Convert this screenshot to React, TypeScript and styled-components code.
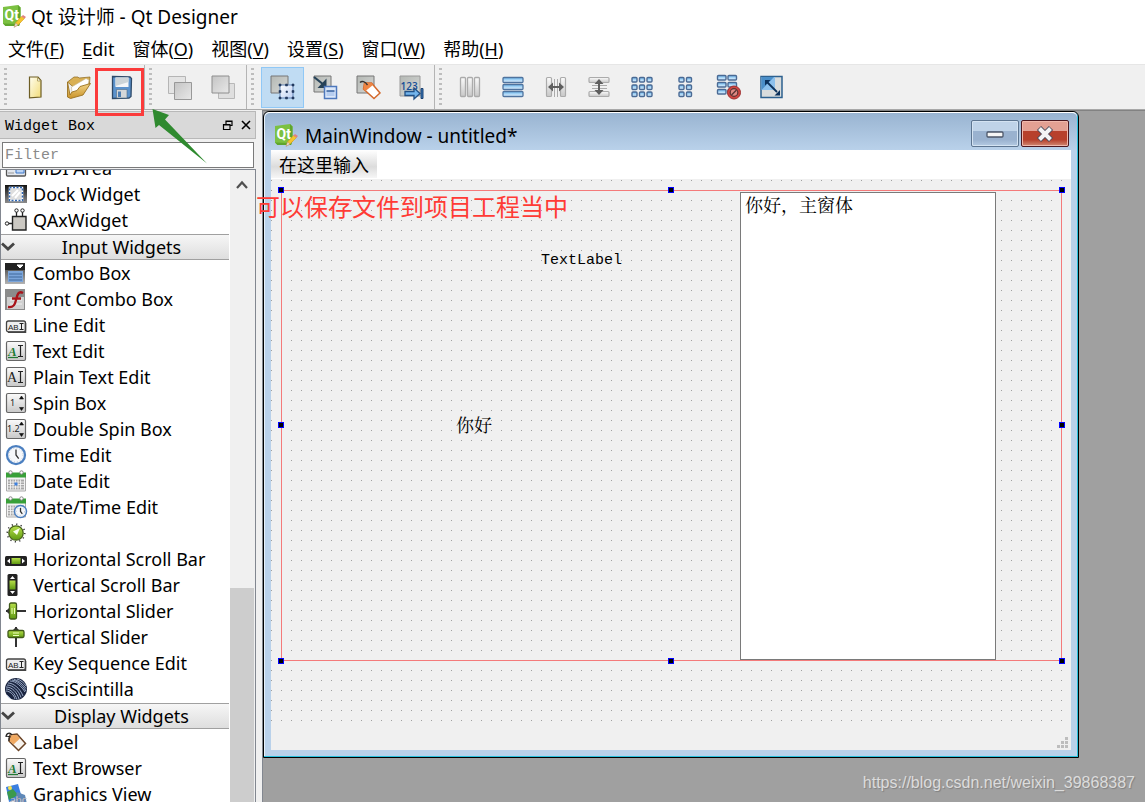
import React from "react";
import styled, { createGlobalStyle } from "styled-components";

const Global = createGlobalStyle`
  * { box-sizing: border-box; }
  body { margin: 0; overflow: hidden; background: #f0f0f0; color: #000;
    font-family: "Noto Sans", "Noto Sans CJK SC", sans-serif; font-size: 18px; }
  button { font: inherit; color: inherit; border: 0; padding: 0; background: none; }
  svg { display: block; flex: none; overflow: visible; }
`;
const mono = `"Liberation Mono", "Noto Sans CJK SC", monospace`;
const song = `"Liberation Mono", "Noto Serif CJK SC", "Noto Sans CJK SC", monospace`;

const Page = styled.div`
  position: relative; display: flex; flex-direction: column; height: 100vh; overflow: hidden;
`;
const AppTitle = styled.header`
  display: flex; align-items: center; gap: 6px; height: 34px; padding: 0 3px 2px; background: #fff; flex: none;
  font-size: 19px;
`;
const Menu = styled.nav`
  display: flex; align-items: center; gap: 18px; height: 30px; padding: 0 8px; background: #fff; flex: none;
`;
const MenuButton = styled.button`
  white-space: nowrap; line-height: 28px;
  u { text-decoration-thickness: 1px; text-underline-offset: 2px; }
`;
const Toolbar = styled.div`
  display: flex; height: 46px; flex: none; background: #f0f0f0;
  border-top: 1px solid #e6e6e6; border-bottom: 1px solid #a8a8a8;
`;
const Tools = styled.div<{ $last?: boolean }>`
  display: flex; align-items: center; padding-right: 1px;
  border-right: ${(p) => (p.$last ? "0" : "1px solid #b4b4b4")};
`;
const Grip = styled.span`
  width: 3px; height: 39px; margin: 0 7px 0 4px;
  background: repeating-linear-gradient(#bdbdbd 0 2px, transparent 2px 5px);
`;
const ToolButton = styled.button<{ $on?: boolean }>`
  display: grid; place-items: center; width: 43px; height: 41px;
  border: 1px solid ${(p) => (p.$on ? "#90c8f6" : "transparent")};
  background: ${(p) => (p.$on ? "#c0dcf3" : "none")};
`;
const Body = styled.div`
  display: grid; grid-template-columns: 256px 1fr; gap: 6px; flex: 1; min-height: 0;
`;
const Dock = styled.aside`
  display: flex; flex-direction: column; min-height: 0;
`;
const DockTitle = styled.div`
  display: flex; align-items: center; gap: 8px; height: 28px; padding: 0 4px 0 5px; flex: none;
  margin-top: 1px; background: #d9d9d9; border: 1px solid #b8b8b8; border-left: 0;
  font: 15px/24px ${mono};
  span { flex: 1; padding-top: 3px; }
`;
const Filter = styled.input`
  height: 26px; margin: 3px 2px 1px; padding: 1px 2px 0; border: 1px solid #7a7a7a; border-radius: 0;
  outline: 0; background: #fff; font: 15px/24px ${mono}; flex: none;
  &::placeholder { color: #8a8a8a; opacity: 1; }
`;
const ListFrame = styled.div`
  display: grid; grid-template-columns: 1fr 25px; flex: 1; min-height: 0; overflow: hidden;
  border: 1px solid #828790; border-bottom: 0; background: #fff;
`;
const ListView = styled.div`
  min-width: 0; min-height: 0; overflow: hidden; padding-right: 1px;
`;
const ListContent = styled.ul`
  list-style: none; padding: 0; margin: -15px 0 0;
`;
const Row = styled.li`
  display: flex; align-items: center; gap: 6px; height: 26px; padding-left: 4px; white-space: nowrap;
`;
const Section = styled.li`
  height: 27px; padding-top: 1px;
`;
const SectionButton = styled.button`
  display: grid; grid-template-columns: 13px 1fr; align-items: center; width: 100%; height: 26px;
  border-top: 1px solid #a0a0a0; border-bottom: 1px solid #a0a0a0;
  background: linear-gradient(#f6f6f6, #dedede); line-height: 24px;
`;
const Scroll = styled.div`
  display: flex; flex-direction: column; background: #f0f0f0; border-right: 1px solid #f0f0f0;
`;
const ScrollUp = styled.button`
  display: grid; place-items: center; height: 30px; flex: none;
`;
const ScrollTrack = styled.div`
  flex: 1; padding-top: 388px;
`;
const ScrollThumb = styled.div`
  height: 100%; background: #cdcdcd;
`;
const Workspace = styled.main`
  position: relative; overflow: hidden; background: #a0a0a0;
  border-top: 1px solid #828282; border-left: 1px solid #828790;
`;
const FormWindow = styled.section`
  position: absolute; left: 0; top: 0; width: 816px;
  border: 1px solid #000; border-radius: 6px 6px 0 0;
  padding: 0 7px 7px; background: #b9d1ea;
  box-shadow: inset -1px -1px 0 #28c0dc, inset 1px 1px 0 #e8f2fb;
`;
const FormTitle = styled.header`
  display: flex; align-items: center; gap: 8px; height: 38px; margin: 0 -6px; padding: 7px 8px 0 10px;
  background: linear-gradient(#99b4d1, #b9d1ea);
  border-top: 1px solid #fff; border-radius: 5px 5px 0 0;
  h2 { flex: 1; margin: 0; padding-top: 2px; font-size: 19px; font-weight: 400; }
`;
const Controls = styled.div`
  display: flex; gap: 2px; align-self: flex-start;
`;
const ControlButton = styled.button<{ $close?: boolean }>`
  display: grid; place-items: center; width: 48px; height: 27px; border-radius: 2px;
  border: 1px solid ${(p) => (p.$close ? "#4a1820" : "#5d7590")};
  box-shadow: inset 0 0 0 1px ${(p) => (p.$close ? "#f0b8ac" : "#d4e3f2")};
  background: ${(p) => (p.$close
    ? "linear-gradient(#e3a093 0 38%, #b7402c 42% 75%, #d08a74)"
    : "linear-gradient(#bfd3e8 0 38%, #9ab2cf 42% 75%, #b4cae2)")};
`;
const FormMenu = styled.div`
  height: 29px; background: #fff;
`;
const TypeHere = styled.button`
  height: 28px; padding: 2px 8px 0; background: linear-gradient(#fff, #dcdcdc 60%, #f6f6f6); line-height: 26px;
`;
const FormCanvas = styled.div`
  position: relative; height: 543px; background: #f0f0f0;
`;
const Dots = styled.svg`
  width: 100%; height: 100%;
`;
const Selection = styled.div`
  position: absolute; left: 10px; top: 11px; width: 781px; height: 471px; border: 1px solid #f47a7a;
`;
const Handles = styled.div`
  position: absolute; inset: -1px; pointer-events: none;
`;
const Handle = styled.i<{ $x: number; $y: number }>`
  position: absolute; width: 6px; height: 6px; background: #000; border: 1px solid #00f;
  left: calc(${(p) => p.$x}% - 3px); top: calc(${(p) => p.$y}% - 3px);
`;
const FormLabel = styled.span<{ $x: number; $y: number; $big?: boolean }>`
  position: absolute; left: ${(p) => p.$x}px; top: ${(p) => p.$y}px;
  font: ${(p) => (p.$big ? 18 : 15)}px/24px ${song}; white-space: nowrap;
`;
const FormText = styled.textarea`
  position: absolute; left: 458px; top: 1px; width: 256px; height: 468px; resize: none; outline: 0;
  margin: 0; padding: 1px 4px; border: 1px solid #7a7a7a; border-radius: 0; background: #fff;
  font: 18px/26px ${song}; overflow: hidden;
`;
const FormStatus = styled.footer`
  display: flex; justify-content: flex-end; align-items: flex-end; height: 28px; padding: 2px 3px; background: #f0f0f0;
`;
const Watermark = styled.div`
  position: absolute; right: 10px; bottom: 7px; color: #dcdcdc; font: 16px/24px "Liberation Sans", sans-serif;
  text-shadow: 1px 1px 1px #808080;
`;
const Note = styled.p`
  position: absolute; left: 256px; top: 190px; margin: 0; color: #ff3b35; font-size: 24px; line-height: 34px; white-space: nowrap;
`;
const Marks = styled.svg`
  position: absolute; left: 92px; top: 64px; width: 120px; height: 104px; pointer-events: none;
`;
const HiddenDefs = styled.svg`
  position: absolute;
`;

const Defs = () => (
  <HiddenDefs width="0" height="0" aria-hidden="true">
    <defs>
      <linearGradient id="gray" x2="1" y2="1"><stop stopColor="#c4c4c4" /><stop offset="1" stopColor="#e8e8e8" /></linearGradient>
      <linearGradient id="gray2" x2="1" y2="1"><stop stopColor="#b4b8b4" /><stop offset="1" stopColor="#d6d8d6" /></linearGradient>
      <linearGradient id="blue" x2="0" y2="1"><stop stopColor="#6db8ee" /><stop offset="1" stopColor="#e8f5ff" /></linearGradient>
      <linearGradient id="pale" x2="1" y2="1"><stop stopColor="#fff" /><stop offset="1" stopColor="#bdd0f2" /></linearGradient>
      <linearGradient id="btn" x2="0" y2="1"><stop stopColor="#fbfbfb" /><stop offset="1" stopColor="#c8c8c8" /></linearGradient>
      <linearGradient id="dark" x2="0" y2="1"><stop stopColor="#333" /><stop offset="1" stopColor="#b4b4b4" /></linearGradient>
      <linearGradient id="dock" x2="0" y2="1"><stop stopColor="#111" /><stop offset="1" stopColor="#8c8c8c" /></linearGradient>
      <linearGradient id="yellow" x2="1" y2="1"><stop stopColor="#fffef0" /><stop offset="1" stopColor="#f2dc78" /></linearGradient>
      <linearGradient id="gold" x2="0" y2="1"><stop stopColor="#f6dc92" /><stop offset="1" stopColor="#c99228" /></linearGradient>
      <linearGradient id="green" x2="0" y2="1"><stop stopColor="#b7e04a" /><stop offset="1" stopColor="#5f9a12" /></linearGradient>
    </defs>
  </HiddenDefs>
);

const QtLogo = () => (
  <svg width="22" height="24" viewBox="0 0 22 24" aria-hidden="true">
    <path d="M0 3 15 1l2.500 2.500V18L16 22H2.500L0 19.500z" fill="#7cc142" /><path d="M15 1l2.500 2.500V18L16 22H2.500L0 19.500l15 .5z" fill="#5fa52c" />
    <text x="1.500" y="15.500" fontSize="14" fontWeight="700" fontFamily="Roboto, sans-serif" fill="#fff">Qt</text>
    <path d="m11.500 22.500 1-3.500 6-6.500 3 2-6.500 6.500z" fill="#f5c52e" stroke="#d99a1e" strokeWidth=".6" /><path d="m11 23.500 1.500-4.500 2.500 2z" fill="#eadfce" stroke="#a08060" strokeWidth=".4" /><path d="m18.500 12.500 1.500-1.500 3 2-1.500 1.500z" fill="#e08080" />
  </svg>
);

const T = ({ children }: { children: React.ReactNode }) => (
  <svg width="24" height="26" viewBox="1 0 24 26" aria-hidden="true">{children}</svg>
);
const NoEntry = () => (
  <g><circle cx="18" cy="18.500" r="6.500" fill="#cf4540" stroke="#a03030" /><circle cx="18" cy="18.500" r="3.800" fill="#df8a84" stroke="#5a3434" strokeWidth="1.200" /><path d="m15.500 21 5-5" stroke="#5a3434" strokeWidth="1.400" /></g>
);
const Cells = ({ xs, ys, w = 5 }: { xs: number[]; ys: number[]; w?: number }) => (
  <>{ys.map((y) => xs.map((x) => <rect key={`${x}-${y}`} x={x} y={y} width={w} height="4.500" rx="1" fill="url(#blue)" stroke="#4a6a94" strokeWidth="1.400" />))}</>
);

const tools: Record<string, React.ReactNode> = {
  new: <T><path d="M6.500 3h8.500l3 3.500V23l-11.500.8z" fill="url(#yellow)" stroke="#6d5d24" strokeWidth="1.200" /><path d="m14.500 3.500 3 3.500h-3z" fill="#fff" stroke="#a39450" strokeWidth=".8" /></T>,
  open: <T><path d="M1.500 8 8 3h4l1 1 11-1-.500 7-8 10z" fill="#d9b054" stroke="#8a661c" strokeWidth=".7" /><path d="M5.500 13 20 4.500l3 1.500-1 5L6 21z" fill="#fff" stroke="#c5b78f" strokeWidth=".6" /><path d="M1.500 8v15l3 1.500L17 21l7.500-11.500L14 12.500l-3 4-5 1.500-2 3z" fill="url(#gold)" stroke="#9a7220" strokeWidth=".9" /></T>,
  save: <T><path d="m3.500 2.500 17.500.5 1.500 1.500-.5 18-2 1.500-16.500.5z" fill="#5b92cc" stroke="#2f4a68" strokeWidth="1.300" /><path d="M6.500 3.500h13v9.500h-13z" fill="#f4f6f8" /><path d="M6.500 3.500h13v4.500l-13 4z" fill="#ccd4d8" /><path d="M7.500 15.500H18V24H7.500z" fill="#d4d7d9" stroke="#4d6b88" strokeWidth=".6" /><path d="M9 17.500h3V23H9z" fill="#4c7db2" /></T>,
  copy: <T><path d="M.5 2.500h17v17H.5z" fill="#e4e4e4" stroke="#b5b5b5" /><path d="M6.500 8.500h17v17h-17z" fill="url(#gray)" stroke="#989898" /></T>,
  back: <T><path d="M7.500 9.500h16v15h-16z" fill="#dfdfdf" stroke="#b8b8b8" /><path d="M1 2h17v17H1z" fill="url(#gray)" stroke="#8e8e8e" /></T>,
  widgets: <T><path d="M1 2h17v17H1z" fill="url(#gray2)" stroke="#777" /><rect x="10" y="11" width="13" height="13" fill="url(#pale)" stroke="#6585b8" /><path d="M9 10h2v2H9zM15.500 10h2v2h-2zM22 10h2v2h-2zM9 16.500h2v2H9zM22 16.500h2v2h-2zM9 23h2v2H9zM15.500 23h2v2h-2zM22 23h2v2h-2zM16 17h1.500v1.500H16z" fill="#243b60" stroke="#243b60" strokeWidth=".6" /></T>,
  signals: <T><path d="M1 2h17v16H1z" fill="url(#gray2)" stroke="#777" /><path d="m1 3 10 8" stroke="#264258" strokeWidth="2.200" /><path d="m13.500 4.500v9.500H4.500z" fill="#264258" /><rect x="11.500" y="12.500" width="12" height="12" fill="#dce8fa" stroke="#4e78bd" strokeWidth="1.500" /><path d="M13.500 17h8v5h-8z" fill="#b6cdf0" /><path d="M13.500 17h8" stroke="#345f9c" strokeWidth="1.500" /></T>,
  buddies: <T><path d="M1 2h17v17H1z" fill="url(#gray2)" stroke="#777" /><path d="M8.500 9h7l8.500 10-6 5.500L7.500 15z" fill="#fff" stroke="#d4692c" strokeWidth="1.500" /><path d="M8.500 9h7l1.500 2-7.500 6L7.500 15z" fill="#ee8544" /><path d="M4 8.500c2-2 5-1 7.500 2.500" fill="none" stroke="#333" strokeWidth="1.300" /></T>,
  tab: <T><path d="M1 2h20v20H1z" fill="url(#gray2)" stroke="#9a9a9a" /><text x="1.500" y="16" fontSize="10" fontFamily="Open Sans, Noto Sans" fontWeight="600" fill="#174f96">123</text><path d="M6 17.500h9V14l6 5.500-6 5.500v-3.500H6z" fill="#73b5ed" stroke="#204f85" strokeWidth="1.300" /><path d="M22 14.500h2v10h-2z" fill="#3677bb" stroke="#1d4270" /></T>,
  horiz: <T><g fill="url(#btn)" stroke="#ababab" strokeWidth="1.300"><rect x="2.500" y="3.500" width="5" height="19" rx="1" /><rect x="9.500" y="3.500" width="5" height="19" rx="1" /><rect x="16.500" y="3.500" width="5" height="19" rx="1" /></g></T>,
  vert: <T><g fill="url(#blue)" stroke="#4f739e" strokeWidth="1.300"><rect x="2" y="3.500" width="20" height="5" rx="1" /><rect x="2" y="10.500" width="20" height="5" rx="1" /><rect x="2" y="17.500" width="20" height="5" rx="1" /></g></T>,
  hsplit: <T><g fill="url(#btn)" stroke="#ababab" strokeWidth="1.200"><rect x="2.500" y="3.500" width="5" height="19" rx="1" /><rect x="16.500" y="3.500" width="5" height="19" rx="1" /></g><path d="M10.500 5v18M13.500 5v18" stroke="#aaa" /><path d="m4 13 5-4.500V12h6V8.500L20 13l-5 4.500V14H9v3.500z" fill="#5e5e5e" /></T>,
  vsplit: <T><g fill="url(#btn)" stroke="#ababab" strokeWidth="1.200"><rect x="2" y="3.500" width="20" height="5" rx="1" /><rect x="2" y="17.500" width="20" height="5" rx="1" /></g><path d="M5 11.500h15M5 14.500h15" stroke="#aaa" /><path d="m12 5 4.500 5H13v6h3.500L12 21l-4.500-5H11v-6H7.500z" fill="#5e5e5e" /></T>,
  grid: <T><Cells xs={[2, 9.5, 17]} ys={[3.5, 11, 18]} /></T>,
  form: <T><Cells xs={[6, 13.5]} ys={[3.5, 11, 18]} /></T>,
  breakup: <T><Cells xs={[1.5, 12]} ys={[1.5, 8.5, 15.5]} w={8.5} /><NoEntry /></T>,
  adjust: <T><path d="M2 2.500h21v21H2z" fill="#d9dcdc" stroke="#2d608e" strokeWidth="1.500" /><path d="M2.500 3H16v13H2.500z" fill="#8cc0ec" /><path d="M2.500 16 15 3H2.500z" fill="#4a8ec8" /><path d="m8 8 10 10" stroke="#0c315b" strokeWidth="1.800" /><path d="M6 6h5.500L6 11.500zM21 21.500h-5.500L21 16z" fill="#0c315b" /></T>,
};

const L = ({ children }: { children: React.ReactNode }) => (
  <svg width="22" height="22" viewBox="0 0 22 22" aria-hidden="true">{children}</svg>
);
const Box = () => <rect x="1.500" y="1.500" width="19" height="19" rx="1.500" fill="url(#btn)" stroke="#666" strokeWidth="1.200" />;
const IBeam = ({ x }: { x: number }) => <path d={`M${x - 2.5} 5.500h5M${x - 2.5} 16.500h5M${x} 5.500v11`} stroke="#222" strokeWidth="1.200" fill="none" />;
const Abi = () => (
  <L><rect x="1.500" y="7" width="19" height="11" rx="2" fill="#eee" stroke="#444" strokeWidth="1.300" /><path d="M3 18.300h17.500V9" stroke="#444" strokeWidth="1.500" fill="none" />
    <text x="3" y="15.500" fontSize="8" fontFamily="Liberation Sans" fill="#222">AB</text><path d="M14.500 9.500h4M14.500 15.500h4M16.500 9.500v6" stroke="#222" fill="none" /></L>
);
const TextEditIcon = () => (
  <L><Box /><text x="3" y="15.500" fontSize="13" fontStyle="italic" fontFamily="Liberation Serif" fontWeight="700" fill="#227a35">A</text><path d="M3 17.500h10" stroke="#227a35" strokeWidth="1.200" /><IBeam x={15.5} /></L>
);
const Spin = ({ text }: { text: string }) => (
  <L><Box /><text x={text.length > 1 ? 2 : 5} y="14" fontSize="9" fontFamily="Noto Sans" fill="#222">{text}</text><path d="m14.500 7 2-3 2 3zM14.500 15.500l2 3 2-3z" fill="#111" stroke="#111" strokeWidth=".6" /></L>
);
const Clock = ({ x = 11, y = 11, r = 9 }: { x?: number; y?: number; r?: number }) => (
  <g><circle cx={x} cy={y} r={r} fill="#f6f8fb" stroke="#4b7fc0" strokeWidth={r / 4} /><circle cx={x} cy={y} r={r - 2} fill="none" stroke="#b9c4d2" strokeDasharray="1 2" /><path d={`M${x} ${y - r * 0.6}V${y}l${r * 0.3} ${r * 0.4}`} fill="none" stroke="#333" strokeWidth="1.300" /></g>
);
const Calendar = () => (
  <g><path d="M1.500 5h19v16h-19z" fill="#f3f3f3" stroke="#aaa" /><path d="M1 2.500h20v5H1z" fill="#38a038" /><path d="M3 9.500h16v10H3z" fill="#a8a8a8" /><path d="M3 12h16M3 14.500h16M3 17h16M5.500 9.500v10M8 9.500v10M10.500 9.500v10M13 9.500v10M15.500 9.500v10" stroke="#f8f8f8" strokeWidth=".8" /><circle cx="5.500" cy="2.500" r="1.700" fill="#fff" stroke="#888" /><circle cx="16.500" cy="2.500" r="1.700" fill="#fff" stroke="#888" /></g>
);
const LabelIcon = () => (
  <L><path d="m5 4 7-1 8.500 9.500-7 7L4 10z" fill="#f7f3ee" stroke="#6b4426" strokeWidth="1.500" /><path d="m5.500 4.500 6-.8 3.500 3.800-6.500 6L4.500 10z" fill="#f0a860" /><path d="M1 6c0-4 4-5 6-2M1 5l5 1M4 5v5" fill="none" stroke="#222" strokeWidth="1.200" /></L>
);

type Item = { name: string; icon?: React.ReactNode };
const items: Item[] = [
  { name: "MDI Area", icon: <L><rect x="1.500" y="2" width="19" height="17" rx="1" fill="#e4e8ee" stroke="#555" strokeWidth="1.300" /><path d="M11 7h8v9h-8z" fill="#bdd5f5" stroke="#3f78c9" /><path d="M3 12h6M3 16h6" stroke="#999" /></L> },
  { name: "Dock Widget", icon: <L><path d="M0 2h22v18H0z" fill="url(#dock)" /><path d="M4.500 4.500h13v13h-13z" fill="#dedede" stroke="#fff" strokeWidth="1.500" /><path d="M4.500 4.500h13v13h-13z" fill="none" stroke="#2e66b4" strokeWidth="1.500" strokeDasharray="2 1.500" /><path d="m7 13 6-6M10 15l5-6" stroke="#fff" strokeWidth="2" /></L> },
  { name: "QAxWidget", icon: <L><path d="M7.500 7.500h13.500V21H7.500z" fill="#cbc8c2" stroke="#222" strokeWidth="1.400" /><path d="M11.500 7V2M17.500 7V2M7 14.500H3" stroke="#222" strokeWidth="1.300" /><circle cx="11.500" cy="1.500" r="1.700" fill="#fff" stroke="#222" /><circle cx="17.500" cy="1.500" r="1.700" fill="#fff" stroke="#222" /><circle cx="2" cy="14.500" r="1.700" fill="#fff" stroke="#222" /></L> },
  { name: "Input Widgets" },
  { name: "Combo Box", icon: <L><path d="M0 1h20v21H0z" fill="url(#dark)" /><path d="M0 1h20v7H0z" fill="#222" /><path d="m12 3 3 3 3-3z" fill="#fff" stroke="#fff" /><path d="M3 9h15v11H3z" fill="#7ba5da" /><path d="M4 12h13M4 15h13M4 18h13" stroke="#41699c" /></L> },
  { name: "Font Combo Box", icon: <L><path d="M0 1h20v21H0z" fill="#8b8b8b" /><path d="M2 9h17v12H2z" fill="#d0d0d0" /><path d="M5 12h12M5 16h12" stroke="#eee" /><path d="M18 5c-5-3-6 3-7 7-1 5-3 8-8 7M7 10.500h9" stroke="#a8141a" strokeWidth="2.300" fill="none" /></L> },
  { name: "Line Edit", icon: <Abi /> },
  { name: "Text Edit", icon: <TextEditIcon /> },
  { name: "Plain Text Edit", icon: <L><Box /><text x="2" y="16" fontSize="14" fontFamily="Liberation Serif" fill="#222">A</text><IBeam x={15.5} /></L> },
  { name: "Spin Box", icon: <Spin text="1" /> },
  { name: "Double Spin Box", icon: <Spin text="1.2" /> },
  { name: "Time Edit", icon: <L><Clock /></L> },
  { name: "Date Edit", icon: <L><Calendar /><path d="M9.500 12.500h3v3h-3z" fill="#3d80df" /></L> },
  { name: "Date/Time Edit", icon: <L><Calendar /><Clock x={15.5} y={15.5} r={6} /></L> },
  { name: "Dial", icon: <L><circle cx="11" cy="11" r="8.800" fill="none" stroke="#333" strokeWidth="1.500" strokeDasharray="1.200 3.400" /><circle cx="11" cy="11" r="7.200" fill="url(#green)" stroke="#47631a" strokeWidth="1.300" /><path d="m15 6-3 7-4-3.500z" fill="#f8fff0" /></L> },
  { name: "Horizontal Scroll Bar", icon: <L><rect x="0" y="8" width="22" height="10" rx="1.500" fill="#222" /><path d="m5 10.500-3 2.500 3 2.500zM17 10.500l3 2.500-3 2.500z" fill="#fff" /><path d="M6.500 10h9v6h-9z" fill="url(#green)" /></L> },
  { name: "Vertical Scroll Bar", icon: <L><rect x="2.500" y="0" width="10" height="22" rx="1.500" fill="#222" /><path d="m5 5 2.500-3L10 5zM5 17l2.500 3 2.500-3z" fill="#fff" /><path d="M4.500 6.500h6v9h-6z" fill="url(#green)" /></L> },
  { name: "Horizontal Slider", icon: <L><path d="M1 11h20" stroke="#333" strokeWidth="2" /><path d="m4 8-3 3 3 3z" fill="#333" /><rect x="4.500" y="3" width="7" height="16" rx="1.500" fill="url(#green)" stroke="#40591a" strokeWidth="1.300" /><path d="M7 8v6M9.500 8v6" stroke="#eaffb8" /></L> },
  { name: "Vertical Slider", icon: <L><path d="M11 1v20" stroke="#333" strokeWidth="2" /><path d="m8 4 3-3 3 3z" fill="#333" /><rect x="3" y="4.500" width="16" height="7" rx="1.500" fill="url(#green)" stroke="#40591a" strokeWidth="1.300" /><path d="M8 7h6M8 9.500h6" stroke="#eaffb8" /></L> },
  { name: "Key Sequence Edit", icon: <Abi /> },
  { name: "QsciScintilla", icon: <L><circle cx="11" cy="11" r="11" fill="#1b2540" /><path d="M3 5c5 0 12 5 15 13M5 3c6 0 12 6 15 11M9 1.500c5 1 9 5 12 9M1 9c6 0 11 5 13 12M1 13c4 0 8 4 9 8M2 17l4 4M2 7c6 0 12 6 14 12.500M7 2c6 1 10 5 14 11M1 11c5 0 9 5 11 10.500M12 1c4 1 7 4 9 7" fill="none" stroke="#a9bad6" strokeWidth=".9" /></L> },
  { name: "Display Widgets" },
  { name: "Label", icon: <LabelIcon /> },
  { name: "Text Browser", icon: <TextEditIcon /> },
  { name: "Graphics View", icon: <L><path d="m1 4 12-3 4 14-13 4z" fill="#3b7fe0" /><path d="m2 9 6-3 5 6-9 5z" fill="#3c9a4c" /><circle cx="5" cy="5" r="2" fill="#f7e34f" /><path d="m12 9 8 3 2 9H9z" fill="#5f88b8" /><text x="5" y="21" fontSize="10" fontFamily="Noto Sans" fill="#fff" stroke="#667" strokeWidth=".3">abc</text></L> },
];

const menus: [string, string, string][] = [
  ["文件(", "F", ")"], ["", "E", "dit"], ["窗体(", "O", ")"], ["视图(", "V", ")"], ["设置(", "S", ")"], ["窗口(", "W", ")"], ["帮助(", "H", ")"],
];
const groups = [
  ["new", "open", "save"], ["copy", "back"], ["widgets", "signals", "buddies", "tab"],
  ["horiz", "vert", "hsplit", "vsplit", "grid", "form", "breakup", "adjust"],
];
const mid = 49.9;
const handles: [number, number][] = [[0, 0], [mid, 0], [100, 0], [0, mid], [100, mid], [0, 100], [mid, 100], [100, 100]];

export default function App() {
  return (
    <Page>
      <Global />
      <Defs />
      <AppTitle><QtLogo /><span>Qt 设计师 - Qt Designer</span></AppTitle>
      <Menu>{menus.map(([a, k, b]) => <MenuButton key={k}>{a}<u>{k}</u>{b}</MenuButton>)}</Menu>
      <Toolbar>
        {groups.map((g, i) => (
          <Tools key={i} $last={i === 3}>
            <Grip />
            {g.map((n) => <ToolButton key={n} $on={n === "widgets"} aria-label={n}>{tools[n]}</ToolButton>)}
          </Tools>
        ))}
      </Toolbar>
      <Body>
        <Dock>
          <DockTitle>
            <span>Widget Box</span>
            <button aria-label="Float"><svg width="10" height="10" viewBox="0 0 10 10"><path d="M3 4V1h6v4.500H7M3 1.500h6M.5 4.500H7v5H.5zM0 5h7" fill="none" stroke="#000" strokeWidth="1.200" /></svg></button>
            <button aria-label="Close dock"><svg width="10" height="10" viewBox="0 0 10 10"><path d="m1 1 8 8M9 1 1 9" stroke="#000" strokeWidth="1.600" /></svg></button>
          </DockTitle>
          <Filter placeholder="Filter" aria-label="Filter" />
          <ListFrame>
            <ListView>
              <ListContent>
                {items.map((it) => it.icon
                  ? <Row key={it.name}>{it.icon}<span>{it.name}</span></Row>
                  : <Section key={it.name}><SectionButton>
                      <svg width="14" height="10" viewBox="0 0 14 10"><path d="m1 1.500 6 5.500 6-5.500" fill="none" stroke="#444" strokeWidth="2.800" /></svg>
                      <span>{it.name}</span>
                    </SectionButton></Section>)}
              </ListContent>
            </ListView>
            <Scroll>
              <ScrollUp aria-label="Scroll up"><svg width="12" height="10" viewBox="0 0 12 10"><path d="m1 8 5-5.500L11 8" fill="none" stroke="#505050" strokeWidth="2.200" /></svg></ScrollUp>
              <ScrollTrack><ScrollThumb /></ScrollTrack>
            </Scroll>
          </ListFrame>
        </Dock>
        <Workspace>
          <FormWindow>
            <FormTitle>
              <QtLogo /><h2>MainWindow - untitled*</h2>
              <Controls>
                <ControlButton aria-label="Minimize"><svg width="18" height="8" viewBox="0 0 18 8"><rect x="1" y="2" width="16" height="5" rx="1" fill="#f6f6f6" stroke="#4c5668" strokeWidth="1.300" /></svg></ControlButton>
                <ControlButton $close aria-label="Close"><svg width="18" height="16" viewBox="0 0 18 16"><path d="m3 2 12 12M15 2 3 14" stroke="#4c4c5c" strokeWidth="6" /><path d="m3.500 2.500 11 11M14.500 2.500l-11 11" stroke="#f4f4f4" strokeWidth="4" /></svg></ControlButton>
              </Controls>
            </FormTitle>
            <FormMenu><TypeHere>在这里输入</TypeHere></FormMenu>
            <FormCanvas>
              <Dots aria-hidden="true">
                <defs><pattern id="dots" width="10" height="10" patternUnits="userSpaceOnUse"><rect y="1" width="1" height="1" fill="#a0a0a0" /></pattern></defs>
                <rect width="100%" height="100%" fill="url(#dots)" />
              </Dots>
              <Selection>
                <FormLabel $x={259} $y={58}>TextLabel</FormLabel>
                <FormLabel $x={174} $y={224} $big>你好</FormLabel>
                <FormText defaultValue="你好，主窗体" aria-label="Text" />
                <Handles>{handles.map(([x, y]) => <Handle key={`${x}-${y}`} $x={x} $y={y} />)}</Handles>
              </Selection>
            </FormCanvas>
            <FormStatus>
              <svg width="11" height="11" viewBox="0 0 11 11"><path d="M8 0h3v3H8zM4 4h3v3H4zM8 4h3v3H8zM0 8h3v3H0zM4 8h3v3H4zM8 8h3v3H8z" fill="#bdbdbd" /></svg>
            </FormStatus>
          </FormWindow>
          <Watermark>https://blog.csdn.net/weixin_39868387</Watermark>
        </Workspace>
      </Body>
      <Note>可以保存文件到项目工程当中</Note>
      <Marks viewBox="0 0 120 104" aria-hidden="true">
        <rect x="4.500" y="5.500" width="46" height="45" fill="none" stroke="#fb3b3b" strokeWidth="3" />
        <path d="m60.500 45 16.500 6-4 4.500 42 44-48-38.500-3.500 3z" fill="#2f8a2f" />
      </Marks>
    </Page>
  );
}
